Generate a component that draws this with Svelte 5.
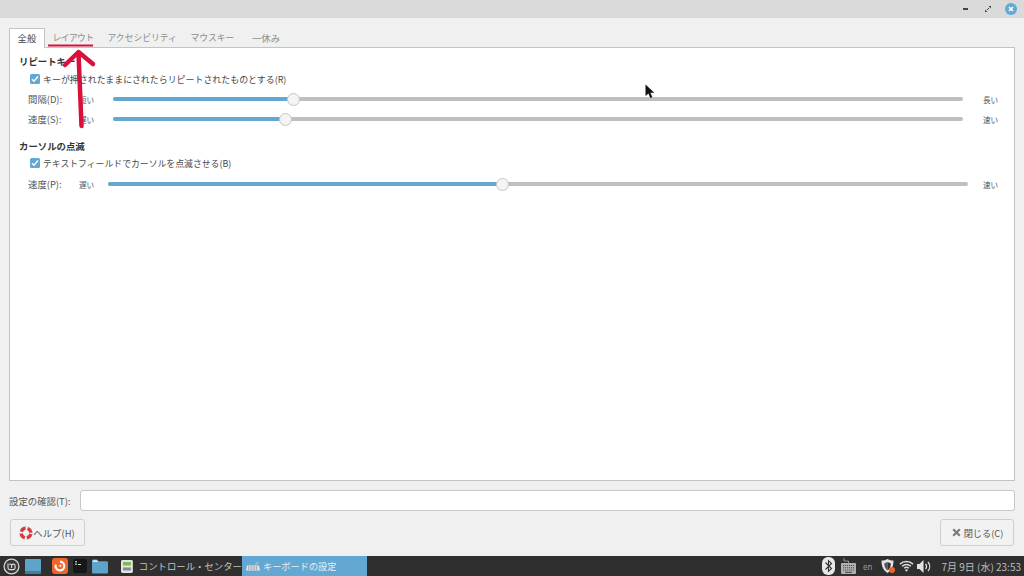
<script>
  const tabs = ['全般', 'レイアウト', 'アクセシビリティ', 'マウスキー', '一休み'];
</script>

<div class="page">
  <header class="titlebar">
    <span class="wm-min"></span>
    <svg class="wm-max" width="6" height="6" viewBox="0 0 6 6"><path d="M3.500 0H6v2.500zM2.500 6H0V3.500z" fill="#444"/><path d="M2 4l2-2" stroke="#444"/></svg>
    <span class="wm-close">
      <svg width="6" height="6" viewBox="0 0 6 6"><path d="M1 1l4 4M5 1L1 5" stroke="#fff" stroke-width="1.6"/></svg>
    </span>
  </header>

  <main class="dialog">
    <div class="notebook">
      <nav class="tabs">
        {#each tabs as t, i}
          <span class="tab" class:active={i === 0}>{t}</span>
        {/each}
      </nav>
      <section class="panel">
        <h3>リピートキー</h3>
        <label class="check"><span class="box"><svg width="8" height="8" viewBox="0 0 8 8"><path d="M1 4.200l2 2L7 1.600" fill="none" stroke="#fff" stroke-width="1.500"/></svg></span>キーが押されたままにされたらリピートされたものとする(R)</label>
        <div class="slider-row r1">
          <span class="lab">間隔(D):</span><span class="end e1">短い</span>
          <div class="track"><div class="fill" style="width:21.2%"></div><span class="thumb"></span></div>
          <span class="end e2">長い</span>
        </div>
        <div class="slider-row r1">
          <span class="lab">速度(S):</span><span class="end e1">遅い</span>
          <div class="track"><div class="fill" style="width:20.2%"></div><span class="thumb"></span></div>
          <span class="end e2">速い</span>
        </div>
        <h3 class="second">カーソルの点滅</h3>
        <label class="check check2"><span class="box"><svg width="8" height="8" viewBox="0 0 8 8"><path d="M1 4.200l2 2L7 1.600" fill="none" stroke="#fff" stroke-width="1.500"/></svg></span>テキストフィールドでカーソルを点滅させる(B)</label>
        <div class="slider-row r3">
          <span class="lab">速度(P):</span><span class="end e1">遅い</span>
          <div class="track"><div class="fill" style="width:45.8%"></div><span class="thumb"></span></div>
          <span class="end e2">速い</span>
        </div>
      </section>
    </div>

    <div class="confirm">
      <span>設定の確認(T):</span>
      <div class="entry"></div>
    </div>

    <div class="actions">
      <button class="btn help">
        <svg width="14" height="14" viewBox="0 0 14 14"><circle cx="7" cy="7" r="6.700" fill="#bdbdbd"/><circle cx="7" cy="7" r="4.700" fill="none" stroke="#f6f6f6" stroke-width="3.400"/><circle cx="7" cy="7" r="4.700" fill="none" stroke="#d8393b" stroke-width="3.400" stroke-dasharray="5.400 1.980" stroke-dashoffset="-0.990"/><circle cx="7" cy="7" r="2.900" fill="#f2f2f2"/></svg>
        ヘルプ(H)
      </button>
      <button class="btn close">
        <svg width="9" height="9" viewBox="0 0 9 9"><path d="M1.200 1.200l6.600 6.600M7.800 1.200L1.200 7.800" stroke="#7a7a7a" stroke-width="2.200"/></svg>
        閉じる(C)
      </button>
    </div>
  </main>

  <footer class="taskbar">
    <svg class="mint" width="17" height="17" viewBox="0 0 17 17"><circle cx="8.500" cy="8.500" r="7.400" fill="#3a3a3a" stroke="#d5d5d5" stroke-width="1.300"/><path d="M5 5.500v4.200c0 1.200.8 1.900 1.900 1.900h3.400c1.100 0 1.800-.7 1.800-1.900V7.700c0-2-2.600-2-3.500-.6-.8-1.400-2-1.200-2.200-.5M8.600 7.200v2.800" fill="none" stroke="#e0e0e0" stroke-width="1.100"/></svg>
    <svg class="desk" width="16" height="15" viewBox="0 0 16 15"><rect width="16" height="15" rx="1" fill="#5ea3c9"/><rect y="12" width="16" height="3" fill="#3f7fa3"/></svg>
    <svg class="fox" width="16" height="16" viewBox="0 0 16 16"><rect width="16" height="16" rx="3" fill="#f0662a"/><path d="M8 3.600a4.400 4.400 0 1 1-4.200 3" fill="none" stroke="#fff" stroke-width="2.100"/><path d="M6.600 7.800l2.600-1.200v2.600z" fill="#fff"/></svg>
    <svg class="term" width="16" height="16" viewBox="0 0 16 16"><rect x=".3" y=".3" width="15.400" height="15.400" rx="3" fill="#171717" stroke="#444" stroke-width=".6"/><path d="M3 3.500h2M3 5h2M3 6.500h2" stroke="#ddd" stroke-width=".7"/><path d="M6 6.500h3" stroke="#ddd"/></svg>
    <svg class="folder" width="16" height="15" viewBox="0 0 17 15"><path d="M0 3V1.500C0 .7.500 0 1.300 0h4L7 2h8.500c.8 0 1.500.6 1.500 1.500V13.500c0 .8-.7 1.500-1.500 1.500h-14C.7 15 0 14.300 0 13.500z" fill="#5ea3c9"/><path d="M1 .8h4.200L6.700 2.600H1z" fill="#dfe9ef"/></svg>
    <div class="task t1">
      <svg width="12" height="13" viewBox="0 0 12 13"><rect width="12" height="13" rx="1.500" fill="#e4e4e4"/><rect x="2" y="2" width="8" height="3.500" fill="#74c148"/><rect x="2" y="7.500" width="8" height="3" fill="#8a8a8a"/></svg>
      <span>コントロール・センター</span>
    </div>
    <div class="task t2">
      <svg width="14" height="9" viewBox="0 0 14 9"><path d="M1 3.500h12l1 5H0z" fill="#e6e6e6"/><path d="M2 5h10M2 7h10" stroke="#555" stroke-width=".7" stroke-dasharray="1 .6"/><path d="M10 3.500V1h3" fill="none" stroke="#ddd" stroke-width=".6"/></svg>
      <span>キーボードの設定</span>
    </div>
    <div class="tray">
      <svg width="13" height="18" viewBox="0 0 13 18"><rect width="13" height="18" rx="6" fill="#e8e8e8"/><path d="M3.500 5.500l6 6-3 2.800V3.700l3 2.800-6 6" fill="none" stroke="#333" stroke-width="1.100"/></svg>
      <svg class="kbd" width="15" height="16" viewBox="0 0 15 16"><path d="M7.500 5V3H3V0" fill="none" stroke="#aaa" stroke-width=".8"/><rect y="5" width="15" height="11" rx="1" fill="#b0b0b0"/><path d="M2 7.500h11M2 9.800h11M2 12.100h11" stroke="#444" stroke-width=".9" stroke-dasharray="1.200 .8"/><path d="M4 14.300h7" stroke="#444"/></svg>
      <span class="en">en</span>
      <svg class="shield" width="16" height="16" viewBox="0 0 16 16"><path d="M7.500 1c2 1.200 4 1.600 6 1.600 0 5.500-1.500 9.600-6 12.400C3 12.200 1.500 8 1.500 2.600c2 0 4-.4 6-1.600z" fill="#e3e3e3"/><path d="M7.500 4v8.500c-2-1.500-3-3.700-3.300-7z" fill="#555"/><path d="M7.500 4c1.500.7 2.200.9 3.300 1.500 0 3-1 5.500-3.300 7z" fill="#333"/><circle cx="12" cy="12" r="3" fill="#f0662a"/></svg>
      <svg class="wifi" width="15" height="12" viewBox="0 0 16 12"><path d="M1 4a10 10 0 0 1 14 0M3.300 6.300a6.800 6.800 0 0 1 9.400 0M5.500 8.500a3.600 3.600 0 0 1 5 0" fill="none" stroke="#dcdcdc" stroke-width="1.500"/><path d="M8 12l-1.700-1.800a2.400 2.400 0 0 1 3.400 0z" fill="#dcdcdc"/></svg>
      <svg class="vol" width="15" height="13" viewBox="0 0 15 13"><path d="M0 4h2.500L6.500 0v13l-4-4H0z" fill="#e3e3e3"/><path d="M8.500 4a3.500 3.500 0 0 1 0 5M11 2a7 7 0 0 1 0 9" fill="none" stroke="#e3e3e3" stroke-width="1.300"/></svg>
      <span class="clock">7月 9日 (水) 23:53</span>
    </div>
  </footer>

  <svg class="annotation" width="110" height="130" viewBox="0 0 110 130">
    <path d="M48 45.500H93" stroke="#d8103a" stroke-width="2"/>
    <path d="M81.500 126L78.500 53M65 65L78.500 52L93 64" fill="none" stroke="#d8103a" stroke-width="4.500" stroke-linecap="round" stroke-linejoin="round"/>
  </svg>
  <svg class="cursor" width="10" height="15" viewBox="0 0 10 15"><path d="M0.500 0.500V12L3.400 9.400L5.300 14L7.300 13L5.400 8.800H9.300z" fill="#111"/></svg>
</div>

<style>
  :global(body) { margin: 0; }
  .page {
    position: relative;
    width: 1024px;
    height: 576px;
    display: flex;
    flex-direction: column;
    overflow: hidden;
    background: #f0f0f0;
    font-family: "Noto Sans CJK JP", "Noto Sans", sans-serif;
    font-size: 9.400px;
    color: #4a4a4a;
  }
  .titlebar {
    height: 18px;
    flex: none;
    background: #dadada;
    display: flex;
    align-items: center;
    justify-content: flex-end;
    padding: 0 7px 0 0;
    box-sizing: border-box;
  }
  .wm-min { width: 5px; height: 2px; background: #444; margin-top: -1px; }
  .wm-max { margin: 0 14px 0 17px; }
  .wm-close {
    width: 12px; height: 12px; border-radius: 50%;
    background: #62aad6;
    display: flex; align-items: center; justify-content: center;
  }
  .dialog {
    flex: 1;
    display: flex;
    flex-direction: column;
    padding: 10px 9px 9px;
    min-height: 0;
  }
  .notebook { height: 453px; display: flex; flex-direction: column; flex: none; }
  .tabs { display: flex; height: 19px; flex: none; position: relative; z-index: 1; }
  .tab {
    line-height: 20px;
    color: #8d8d8d;
    font-size: 8.800px;
    white-space: nowrap;
  }
  .tab:nth-child(2) { padding-left: 7.500px; letter-spacing: -0.600px; }
  .tab:nth-child(3) { padding-left: 14px; }
  .tab:nth-child(4) { padding-left: 13.500px; }
  .tab:nth-child(5) { padding-left: 17.500px; font-size: 9.400px; }
  .tab.active {
    width: 36px;
    text-align: center;
    font-size: 9.400px;
    background: #fff;
    border: 1px solid #c4c4c4;
    border-bottom: none;
    color: #444;
    height: 20px;
    line-height: 19px;
    box-sizing: border-box;
  }
  .panel {
    flex: 1;
    background: #fff;
    border: 1px solid #c4c4c4;
    box-sizing: border-box;
    padding: 6px 16px 0 9px;
  }
  h3 { margin: 0; font-size: 9.400px; font-weight: 700; color: #333; line-height: 14px; height: 14px; }
  h3.second { margin-top: 13px; }
  .check {
    display: flex;
    align-items: center;
    height: 14px;
    margin: 4px 0 0 11px;
    white-space: nowrap;
    color: #484848;
    font-size: 8.950px;
  }
  .check2 { margin-top: 3px; font-size: 8.850px; }
  .box {
    width: 10px; height: 10px; flex: none;
    background: #62a8d2;
    border-radius: 1.500px;
    margin-right: 3px;
    display: flex; align-items: center; justify-content: center;
  }
  .slider-row {
    display: flex;
    align-items: center;
    height: 14px;
    margin: 6px 0 0 9px;
  }
  .r3 { margin-top: 7px; }
  .lab { width: 51px; flex: none; color: #555; white-space: nowrap; }
  .end { font-size: 7.600px; flex: none; white-space: nowrap; color: #555; }
  .e1 { width: 34px; }
  .e2 { margin-left: 20px; width: 15px; }
  .r3 .e1 { width: 29px; }
  .r3 .e2 { margin-left: 15px; }
  .track {
    flex: 1;
    height: 4px;
    border-radius: 2px;
    background: #bfbfbf;
    display: flex;
    align-items: center;
    min-width: 0;
  }
  .fill { height: 4px; background: #64a8d0; border-radius: 2px 0 0 2px; }
  .thumb {
    width: 13px; height: 13px; flex: none;
    box-sizing: border-box;
    border-radius: 50%;
    background: #f4f4f4;
    border: 1px solid #c6c6c6;
    margin-left: -6px;
  }
  .confirm {
    display: flex;
    align-items: center;
    gap: 8px;
    margin-top: 9px;
    height: 21px;
    color: #555;
  }
  .confirm span { width: 63px; white-space: nowrap; }
  .entry {
    flex: 1;
    height: 21px;
    background: #fff;
    border: 1px solid #c8c8c8;
    border-radius: 3px;
    box-sizing: border-box;
  }
  .actions {
    display: flex;
    justify-content: space-between;
    margin-top: 8px;
    padding: 0 1px;
  }
  .btn {
    height: 27px;
    font: inherit;
    color: #555;
    background: #f2f2f2;
    border: 1px solid #cfcfcf;
    border-radius: 3px;
    box-sizing: border-box;
    display: flex;
    align-items: center;
    white-space: nowrap;
    padding: 0;
    justify-content: center;
  }
  .help { width: 75px; gap: 0; padding-right: 1px; }
  .close { width: 74px; gap: 3px; font-size: 9.200px; padding-left: 1px; }
  .taskbar {
    height: 20px;
    flex: none;
    background: #2f2f2f;
    display: flex;
    align-items: center;
    color: #cfcfcf;
    padding-left: 3px;
  }
  .mint { flex: none; }
  .desk { margin-left: 5px; }
  .fox { margin-left: 11px; }
  .term { margin-left: 4px; }
  .folder { margin-left: 4px; }
  .task { display: flex; align-items: center; height: 20px; flex: none; white-space: nowrap; }
  .t1 { margin-left: 13px; width: 121px; gap: 6px; color: #c4c4c4; font-size: 9.400px; }
  .t2 { background: #62a8d2; width: 125px; padding-left: 4px; box-sizing: border-box; gap: 3px; color: #e8eef2; font-size: 9.200px; }
  .tray { margin-left: auto; display: flex; align-items: center; padding-right: 3px; }
  .kbd { margin-left: 6px; }
  .en { margin-left: 7px; font-family: "Noto Sans", sans-serif; font-size: 8px; color: #9a9a9a; }
  .shield { margin-left: 8px; }
  .wifi { margin-left: 3px; }
  .vol { margin-left: 3px; }
  .clock { margin-left: 9px; color: #bdbdbd; font-size: 10px; white-space: nowrap; }
  .annotation { position: absolute; left: 0; top: 0; pointer-events: none; }
  .cursor { position: absolute; left: 645px; top: 84px; }
</style>
